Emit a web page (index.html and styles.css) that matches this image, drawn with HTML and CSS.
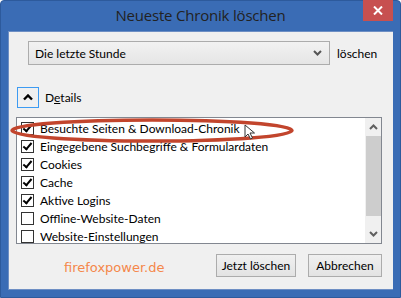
FILE: index.html
```html
<!DOCTYPE html>
<html lang="de">
<head>
    <meta charset="UTF-8">
    <title>Neueste Chronik löschen</title>
    <link rel="stylesheet" href="styles.css">
</head>
<body>
    <div class="window">
        <div class="titlebar">
            <span class="title">Neueste Chronik löschen</span>
            <button type="button" class="close-btn">
                <svg width="10" height="9" viewBox="0 0 10 9"><path d="M1 0.5 L9 8.5 M9 0.5 L1 8.5" stroke="#fff" stroke-width="2"/></svg>
            </button>
        </div>

        <div class="client">
            <div class="range-row">
                <div class="dropdown">
                    <span>Die letzte Stunde</span>
                    <svg width="9" height="6" viewBox="0 0 9 6"><path d="M1 1 L4.5 4.5 L8 1" stroke="#555" stroke-width="2" fill="none"/></svg>
                </div>
                <span class="range-label">löschen</span>
            </div>

            <div class="details-row">
                <button type="button" class="details-btn">
                    <svg width="10" height="7" viewBox="0 0 10 7"><path d="M1 5.5 L5 1.5 L9 5.5" stroke="#000" stroke-width="2.4" fill="none"/></svg>
                </button>
                <span>D<u>e</u>tails</span>
            </div>

            <div class="listbox">
                <ul class="items">
                    <li><span class="check on"></span>Besuchte Seiten &amp; Download-Chronik</li>
                    <li><span class="check on"></span>Eingegebene Suchbegriffe &amp; Formulardaten</li>
                    <li><span class="check on"></span>Cookies</li>
                    <li><span class="check on"></span>Cache</li>
                    <li><span class="check on"></span>Aktive Logins</li>
                    <li><span class="check"></span>Offline-Website-Daten</li>
                    <li><span class="check"></span>Website-Einstellungen</li>
                </ul>
                <div class="scrollbar">
                    <svg width="9" height="6" viewBox="0 0 9 6"><path d="M1 5 L4.5 1.5 L8 5" stroke="#606060" stroke-width="2" fill="none"/></svg>
                    <div class="thumb"></div>
                    <div class="track"></div>
                    <svg width="9" height="6" viewBox="0 0 9 6"><path d="M1 1 L4.5 4.5 L8 1" stroke="#606060" stroke-width="2" fill="none"/></svg>
                </div>
            </div>

            <div class="footer">
                <span class="brand">firefoxpower.de</span>
                <button type="button" class="btn btn-wide">Jetzt löschen</button>
                <button type="button" class="btn">Abbrechen</button>
            </div>
        </div>

        <!-- annotation over the first row -->
        <svg class="marker" width="300" height="30" viewBox="0 0 300 30">
            <ellipse cx="143" cy="14.5" rx="140" ry="10.5" stroke="#c2452d" stroke-width="3.5" fill="none"/>
        </svg>
        <svg class="cursor" width="14" height="16" viewBox="0 0 14 16">
            <path d="M1 1 L1 13 L4 10 L6.5 15 L8.5 14 L6 9 L10.5 9 Z" fill="#fff" stroke="#333" stroke-width="1"/>
        </svg>
    </div>
</body>
</html>
```

FILE: styles.css
```css
body {
    margin: 0;
    font-family: Lato, "Open Sans", sans-serif;
    font-size: 12px;
}
.window {
    position: relative;
    width: 401px;
    height: 298px;
    box-sizing: border-box;
    background: #3a6cb5;
    border: 1px solid #2d5a9c;
    border-radius: 4px 4px 0 0;
    padding: 0 7px 7px 7px;
    display: flex;
    flex-direction: column;
}
.titlebar {
    height: 30px;
    display: flex;
    justify-content: center;
    align-items: flex-start;
    position: relative;
}
.title {
    margin-top: 4px;
    font-family: "Open Sans", sans-serif;
    font-size: 15px;
    color: #222;
    letter-spacing: -0.2px;
}
.close-btn {
    position: absolute;
    right: 0;
    top: -1px;
    width: 30px;
    height: 21px;
    border: none;
    background: #c75050;
    padding: 0;
    display: flex;
    align-items: center;
    justify-content: center;
}
.client {
    flex: 1;
    background: #f0f0f0;
    border: 1px solid #6e8fc4;
    border-right: none;
    padding: 9px 11px 0 7px;
    display: flex;
    flex-direction: column;
}
.range-row {
    display: flex;
    align-items: center;
    padding-left: 12px;
}
.dropdown {
    flex: none;
    width: 302px;
    height: 24px;
    box-sizing: border-box;
    border: 1px solid #acacac;
    background: linear-gradient(#f2f2f2, #e5e5e5);
    display: flex;
    align-items: center;
    justify-content: space-between;
    padding: 0 7px 0 6px;
}
.dropdown span {
    color: #000;
}
.range-label {
    margin-left: 7px;
    color: #000;
}
.details-row {
    display: flex;
    align-items: center;
    margin-top: 22px;
    margin-left: 1px;
}
.details-btn {
    width: 22px;
    height: 21px;
    border: 1px solid #3d9bf2;
    background: #f0f0f0;
    padding: 0;
    display: flex;
    align-items: center;
    justify-content: center;
    margin-right: 6px;
}
.details-row span {
    color: #000;
}
.listbox {
    margin-top: 9px;
    height: 125px;
    border: 1px solid #828790;
    background: #fff;
    display: flex;
}
.items {
    flex: 1;
    list-style: none;
    margin: 0;
    padding: 1px 0 0 4px;
}
.items li {
    height: 18px;
    display: flex;
    align-items: center;
    color: #000;
    white-space: nowrap;
}
.check {
    width: 11px;
    height: 11px;
    border: 1px solid #333;
    background: #fff;
    margin-right: 6px;
    position: relative;
}
.check.on::after {
    content: "";
    position: absolute;
    left: 3px;
    top: 0px;
    width: 3px;
    height: 7px;
    border: solid #000;
    border-width: 0 2px 2px 0;
    transform: rotate(40deg);
}
.scrollbar {
    width: 16px;
    background: #f0f0f0;
    display: flex;
    flex-direction: column;
    align-items: center;
}
.scrollbar svg {
    margin: 6px 0;
}
.thumb {
    width: 15px;
    height: 80px;
    background: #cdcdcd;
}
.track {
    flex: 1;
}
.footer {
    display: flex;
    align-items: center;
    margin-top: 10px;
}
.brand {
    margin-left: 48px;
    margin-right: auto;
    font-family: "DejaVu Sans", sans-serif;
    font-size: 13px;
    color: #f5874a;
    margin-top: 3px;
}
.btn {
    width: 74px;
    height: 23px;
    border: 1px solid #acacac;
    background: linear-gradient(#f0f0f0, #e3e3e3);
    font-family: inherit;
    font-size: 12px;
    color: #000;
    padding: 0;
}
.btn-wide {
    width: 80px;
    margin-right: 12px;
}
.marker {
    position: absolute;
    left: 8px;
    top: 115px;
}
.cursor {
    position: absolute;
    left: 243px;
    top: 123px;
}
```
